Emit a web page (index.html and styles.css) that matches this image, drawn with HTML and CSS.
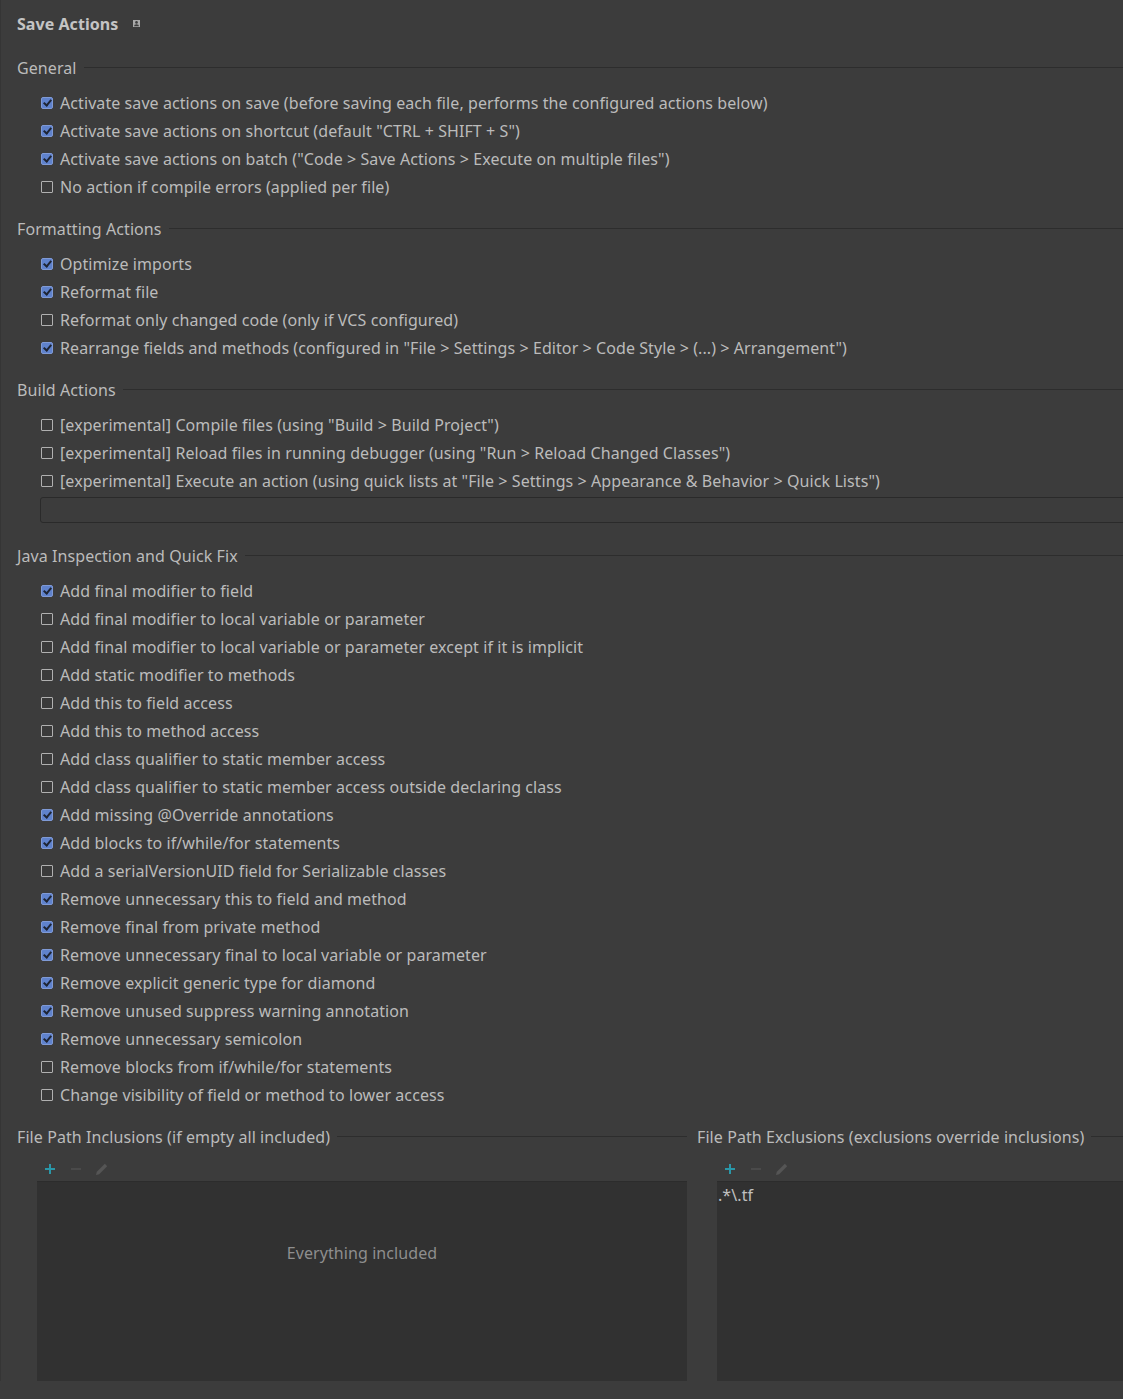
FILE: index.html
```html
<!DOCTYPE html>
<html>
<head>
<meta charset="utf-8">
<title>Save Actions</title>
<link rel="stylesheet" href="styles.css">
</head>
<body>
<div class="page">
  <div class="title-row">
    <span class="title">Save Actions</span>
    <svg class="scope-icon" width="7" height="7" viewBox="0 0 7 7"><rect x="0" y="0" width="7" height="7" fill="#a9a9a9"/><circle cx="3.5" cy="2.4" r="1.3" fill="#3c3c3c"/><path d="M1 6.3 Q1 4.3 3.5 4.3 Q6 4.3 6 6.3 Z" fill="#3c3c3c"/></svg>
  </div>

  <section class="group">
    <div class="group-head"><span>General</span><i class="rule"></i></div>
    <div class="rows">
      <div class="row"><span class="cb on"></span>Activate save actions on save (before saving each file, performs the configured actions below)</div>
      <div class="row"><span class="cb on"></span>Activate save actions on shortcut (default "CTRL + SHIFT + S")</div>
      <div class="row"><span class="cb on"></span>Activate save actions on batch ("Code &gt; Save Actions &gt; Execute on multiple files")</div>
      <div class="row"><span class="cb"></span>No action if compile errors (applied per file)</div>
    </div>
  </section>

  <section class="group">
    <div class="group-head"><span>Formatting Actions</span><i class="rule"></i></div>
    <div class="rows">
      <div class="row"><span class="cb on"></span>Optimize imports</div>
      <div class="row"><span class="cb on"></span>Reformat file</div>
      <div class="row"><span class="cb"></span>Reformat only changed code (only if VCS configured)</div>
      <div class="row"><span class="cb on"></span>Rearrange fields and methods (configured in "File &gt; Settings &gt; Editor &gt; Code Style &gt; (...) &gt; Arrangement")</div>
    </div>
  </section>

  <section class="group group-build">
    <div class="group-head"><span>Build Actions</span><i class="rule"></i></div>
    <div class="rows">
      <div class="row"><span class="cb"></span>[experimental] Compile files (using "Build &gt; Build Project")</div>
      <div class="row"><span class="cb"></span>[experimental] Reload files in running debugger (using "Run &gt; Reload Changed Classes")</div>
      <div class="row"><span class="cb"></span>[experimental] Execute an action (using quick lists at "File &gt; Settings &gt; Appearance &amp; Behavior &gt; Quick Lists")</div>
      <div class="textfield"></div>
    </div>
  </section>

  <section class="group">
    <div class="group-head"><span>Java Inspection and Quick Fix</span><i class="rule"></i></div>
    <div class="rows">
      <div class="row"><span class="cb on"></span>Add final modifier to field</div>
      <div class="row"><span class="cb"></span>Add final modifier to local variable or parameter</div>
      <div class="row"><span class="cb"></span>Add final modifier to local variable or parameter except if it is implicit</div>
      <div class="row"><span class="cb"></span>Add static modifier to methods</div>
      <div class="row"><span class="cb"></span>Add this to field access</div>
      <div class="row"><span class="cb"></span>Add this to method access</div>
      <div class="row"><span class="cb"></span>Add class qualifier to static member access</div>
      <div class="row"><span class="cb"></span>Add class qualifier to static member access outside declaring class</div>
      <div class="row"><span class="cb on"></span>Add missing @Override annotations</div>
      <div class="row"><span class="cb on"></span>Add blocks to if/while/for statements</div>
      <div class="row"><span class="cb"></span>Add a serialVersionUID field for Serializable classes</div>
      <div class="row"><span class="cb on"></span>Remove unnecessary this to field and method</div>
      <div class="row"><span class="cb on"></span>Remove final from private method</div>
      <div class="row"><span class="cb on"></span>Remove unnecessary final to local variable or parameter</div>
      <div class="row"><span class="cb on"></span>Remove explicit generic type for diamond</div>
      <div class="row"><span class="cb on"></span>Remove unused suppress warning annotation</div>
      <div class="row"><span class="cb on"></span>Remove unnecessary semicolon</div>
      <div class="row"><span class="cb"></span>Remove blocks from if/while/for statements</div>
      <div class="row"><span class="cb"></span>Change visibility of field or method to lower access</div>
    </div>
  </section>

  <div class="paths">
    <section class="path-col">
      <div class="group-head"><span>File Path Inclusions (if empty all included)</span><i class="rule"></i></div>
      <div class="toolbar">
        <svg class="tb" width="14" height="14" viewBox="0 0 14 14"><path d="M7 2V12M2 7H12" stroke="#2a97a8" stroke-width="2"/></svg>
        <svg class="tb" width="14" height="14" viewBox="0 0 14 14"><path d="M2 7H12" stroke="#4a4a4a" stroke-width="2"/></svg>
        <svg class="tb" width="14" height="14" viewBox="0 0 14 14"><path d="M1 13L1.8 9.8L9.8 1.8L12.2 4.2L4.2 12.2Z" fill="#555555"/></svg>
      </div>
      <div class="list list-empty"><span class="empty-text">Everything included</span></div>
    </section>
    <section class="path-col">
      <div class="group-head"><span>File Path Exclusions (exclusions override inclusions)</span><i class="rule"></i></div>
      <div class="toolbar">
        <svg class="tb" width="14" height="14" viewBox="0 0 14 14"><path d="M7 2V12M2 7H12" stroke="#2a97a8" stroke-width="2"/></svg>
        <svg class="tb" width="14" height="14" viewBox="0 0 14 14"><path d="M2 7H12" stroke="#4a4a4a" stroke-width="2"/></svg>
        <svg class="tb" width="14" height="14" viewBox="0 0 14 14"><path d="M1 13L1.8 9.8L9.8 1.8L12.2 4.2L4.2 12.2Z" fill="#555555"/></svg>
      </div>
      <div class="list"><div class="list-item">.*\.tf</div></div>
    </section>
  </div>
</div>
</body>
</html>
```

FILE: styles.css
```css
html, body {
  margin: 0;
  padding: 0;
  background: #3c3c3c;
  overflow: hidden;
}

body {
  font-family: "Noto Sans", "Open Sans", sans-serif;
  font-size: 16px;
  letter-spacing: 0.08px;
  color: #bbbbbb;
  border-left: 1px solid #353535;
}

.page {
  width: 1350px;
  padding: 10px 0 0 16px;
  box-sizing: border-box;
}

.title-row {
  height: 28px;
  display: flex;
  align-items: center;
  margin-bottom: 16px;
}

.title {
  font-weight: bold;
  color: #c4c4c4;
  letter-spacing: 0.05px;
}

.scope-icon {
  margin-left: 15px;
  margin-top: -2px;
}

.group {
  margin-bottom: 14px;
}

.group-head {
  height: 28px;
  display: flex;
  align-items: center;
  white-space: nowrap;
}

.rule {
  flex: 1;
  height: 1px;
  background: #2d2d2d;
  margin-left: 7px;
  margin-top: -1px;
}

.rows {
  margin-top: 7px;
  padding-left: 24px;
}

.row {
  height: 28px;
  display: flex;
  align-items: center;
  white-space: nowrap;
}

.cb {
  width: 12px;
  height: 12px;
  box-sizing: border-box;
  border: 1px solid #b0b0b0;
  border-radius: 1px;
  background: #3a3a3a;
  margin-right: 7px;
  flex: none;
  position: relative;
}

.cb.on {
  background: #5f82cc;
  border-color: #7f9ad6;
  border-radius: 2px;
}

.cb.on::after {
  content: "";
  position: absolute;
  left: 3px;
  top: 0px;
  width: 3px;
  height: 6px;
  border-right: 2px solid #1e2535;
  border-bottom: 2px solid #1e2535;
  transform: rotate(40deg);
}

.textfield {
  height: 26px;
  box-sizing: border-box;
  margin-top: 2px;
  margin-left: -1px;
  border: 1px solid #2a2a2a;
  border-radius: 3px;
  background: #3c3c3c;
}

.group-build {
  margin-bottom: 19px;
}

.paths {
  display: flex;
  gap: 10px;
}

.path-col {
  width: 670px;
  flex: none;
}

.toolbar {
  height: 30px;
  display: flex;
  align-items: flex-start;
  padding-left: 26px;
  gap: 12px;
}

.tb {
  margin-top: 11px;
}

.list {
  margin-left: 20px;
  height: 200px;
  background: #313131;
  border-top: 1px solid #2c2c2c;
  box-sizing: border-box;
}

.list-empty {
  display: flex;
  justify-content: center;
  padding-top: 59px;
}

.empty-text {
  color: #8e8e8e;
  line-height: 24px;
  height: 24px;
}

.list-item {
  padding-left: 1px;
  line-height: 26px;
  color: #c0c0c0;
}
```
